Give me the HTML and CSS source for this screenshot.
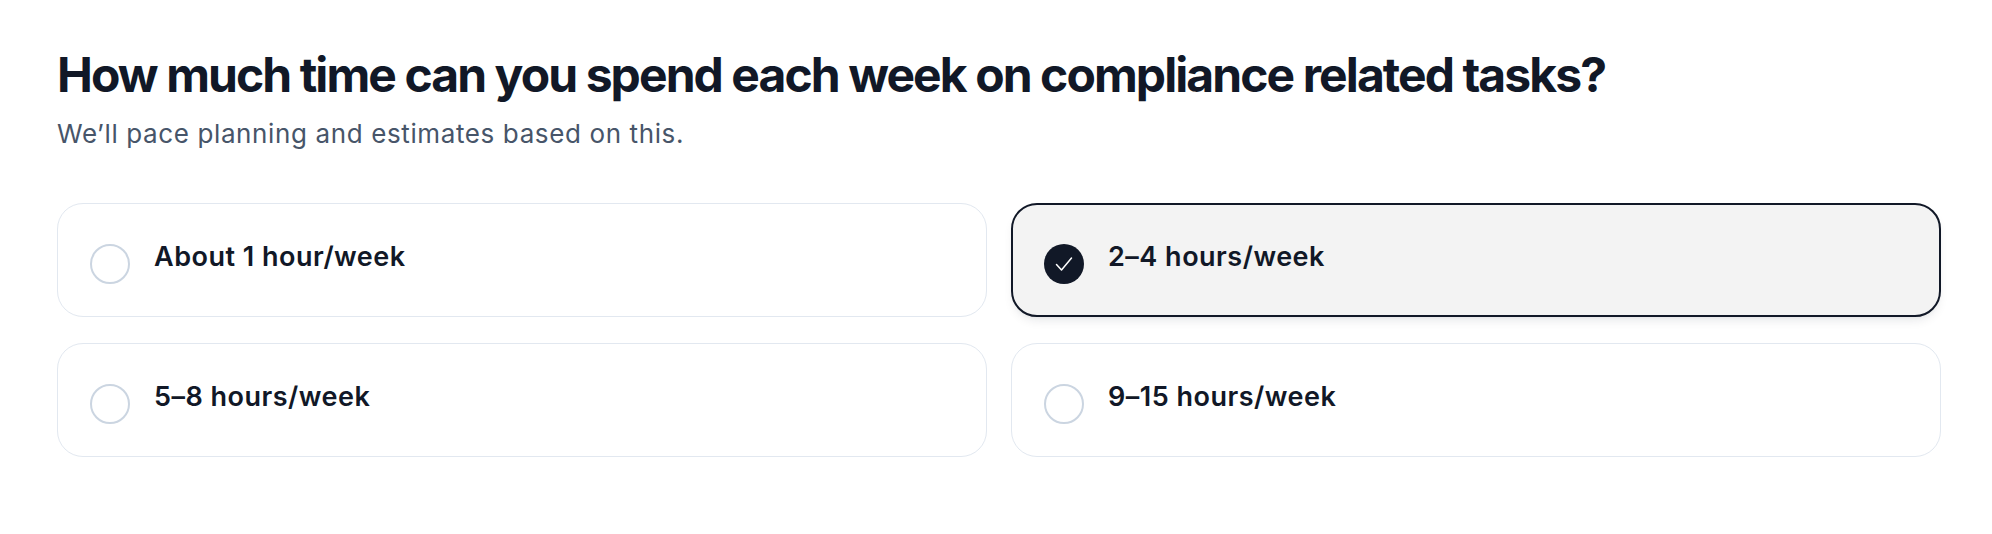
FILE: index.html
```html
<!DOCTYPE html>
<html lang="en">
<head>
<meta charset="utf-8">
<title>Weekly time</title>
<link rel="stylesheet" href="styles.css">
</head>
<body>
<main class="page">
  <h1 class="title">How much time can you spend each week on compliance related tasks?</h1>
  <p class="subtitle">We’ll pace planning and estimates based on this.</p>
  <div class="options">
    <div class="option">
      <span class="radio"></span>
      <span class="label">About 1 hour/week</span>
    </div>
    <div class="option selected">
      <span class="radio checked">
        <svg viewBox="0 0 24 24" width="24" height="24" fill="none" stroke="#ffffff" stroke-width="1.5" stroke-linecap="round" stroke-linejoin="round"><path d="M4.5 12.5l5 5.5 10-12"/></svg>
      </span>
      <span class="label">2–4 hours/week</span>
    </div>
    <div class="option">
      <span class="radio"></span>
      <span class="label">5–8 hours/week</span>
    </div>
    <div class="option">
      <span class="radio"></span>
      <span class="label">9–15 hours/week</span>
    </div>
  </div>
</main>
</body>
</html>
```
FILE: styles.css
```css
html, body {
  margin: 0;
  padding: 0;
  background: #ffffff;
}
body {
  font-family: Inter, "Noto Sans", "Liberation Sans", sans-serif;
  color: #111827;
}
.page {
  padding: 47px 0 0 57px;
  width: 1884px;
}
.title {
  margin: 0;
  font-size: 48px;
  line-height: 56px;
  font-weight: 700;
  letter-spacing: -0.04em;
  color: #111827;
}
.subtitle {
  margin: 15px 0 0;
  font-size: 26px;
  line-height: 32px;
  font-weight: 400;
  letter-spacing: 0.62px;
  color: #475569;
}
.options {
  margin-top: 53px;
  display: grid;
  grid-template-columns: 1fr 1fr;
  column-gap: 24px;
  row-gap: 26px;
}
.option {
  box-sizing: border-box;
  height: 114px;
  border: 1px solid #e2e8f0;
  border-radius: 26px;
  background: #ffffff;
  padding: 32px 32px;
  display: flex;
  align-items: flex-start;
  gap: 24px;
}
.option.selected {
  border: 2px solid #111827;
  padding: 31px 31px;
  background: #f3f3f3;
  box-shadow: 0 6px 12px -4px rgba(15, 23, 42, 0.12), 0 2px 4px -2px rgba(15, 23, 42, 0.06);
}
.radio {
  box-sizing: border-box;
  flex: none;
  width: 40px;
  height: 40px;
  margin-top: 8px;
  border-radius: 50%;
  border: 2px solid #cbd5e1;
  display: flex;
  align-items: center;
  justify-content: center;
}
.radio.checked {
  border: none;
  background: #111827;
}
.label {
  font-size: 27px;
  line-height: 42px;
  font-weight: 600;
  letter-spacing: 0.5px;
  color: #111827;
}
```
